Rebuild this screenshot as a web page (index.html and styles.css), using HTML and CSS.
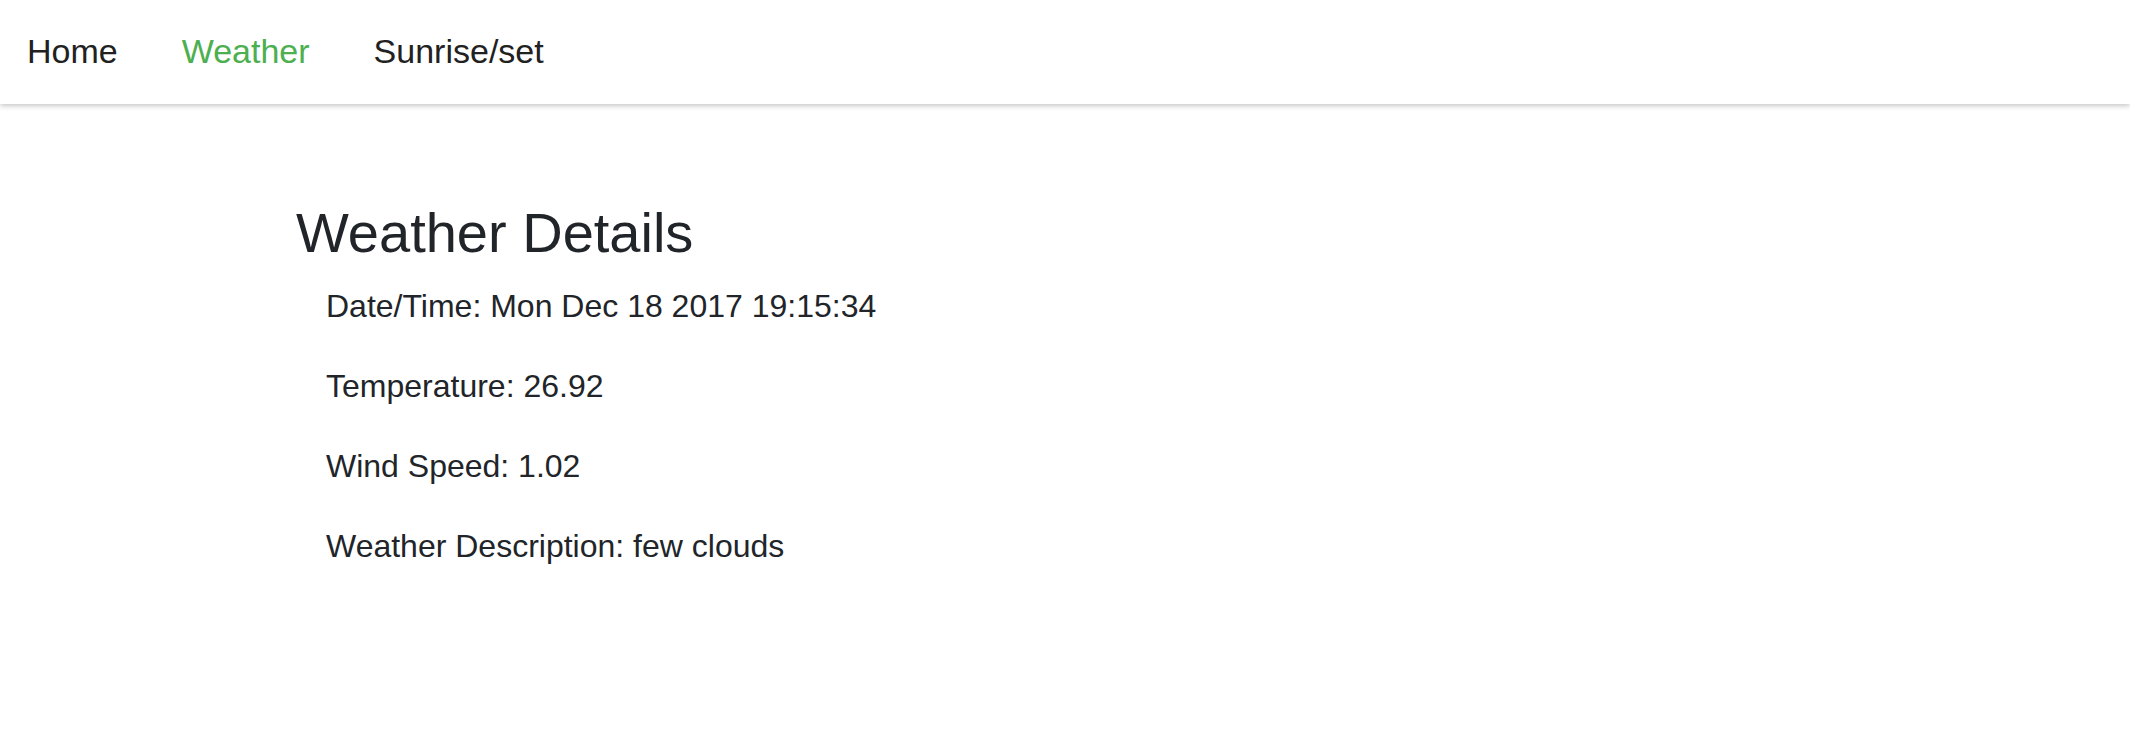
FILE: index.html
```html
<!DOCTYPE html>
<html lang="en">
<head>
<meta charset="utf-8">
<title>Weather Details</title>
<link rel="stylesheet" href="styles.css">
</head>
<body>
<nav class="navbar">
  <a class="nav-link" href="#">Home</a>
  <a class="nav-link active" href="#">Weather</a>
  <a class="nav-link" href="#">Sunrise/set</a>
</nav>
<main class="content">
  <h3 class="title">Weather Details</h3>
  <div class="details">
    <p class="detail">Date/Time: Mon Dec 18 2017 19:15:34</p>
    <p class="detail">Temperature: 26.92</p>
    <p class="detail">Wind Speed: 1.02</p>
    <p class="detail">Weather Description: few clouds</p>
  </div>
</main>
</body>
</html>
```

FILE: styles.css
```css
html, body {
  margin: 0;
  padding: 0;
  background: #fff;
}
body {
  font-family: "Liberation Sans", Arial, Helvetica, sans-serif;
  color: #212529;
}
.navbar {
  height: 104px;
  display: flex;
  align-items: center;
  gap: 64px;
  padding: 0 27px;
  background: #fff;
  box-shadow: 0 2px 5px rgba(0, 0, 0, 0.22);
  position: relative;
}
.nav-link {
  font-size: 34px;
  color: #212121;
  text-decoration: none;
  line-height: 1.15;
}
.nav-link.active {
  color: #4caf50;
}
.content {
  padding: 95px 0 0 296px;
}
.title {
  margin: 0 0 16px 0;
  font-size: 56px;
  font-weight: 400;
  line-height: 1.2;
  color: #212529;
}
.details {
  padding-left: 30px;
}
.detail {
  margin: 0 0 32px 0;
  font-size: 32px;
  line-height: 1.5;
  color: #212529;
}
```
